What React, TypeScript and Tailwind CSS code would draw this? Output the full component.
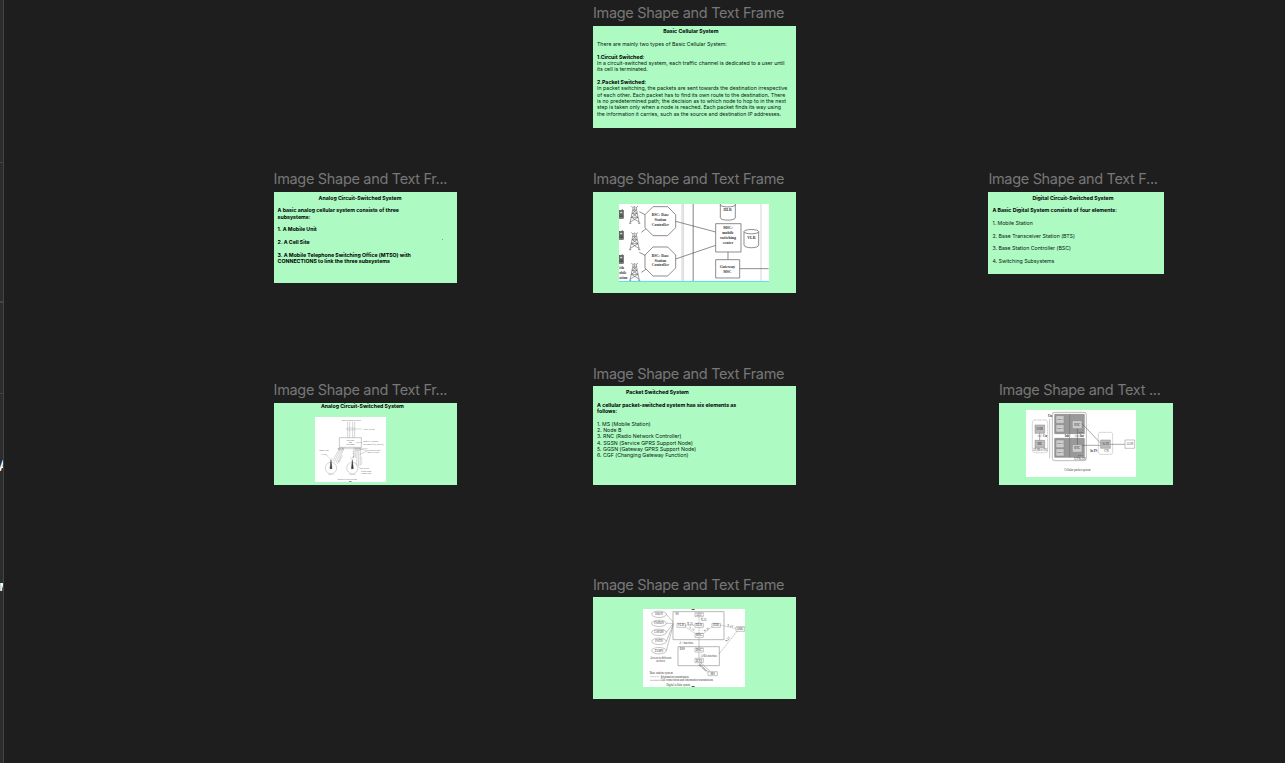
import type { ReactNode } from "react";

type FrameProps = { place: string; size: string; label?: string; gap?: string; children?: ReactNode };

function Frame({ place, size, label = "Image Shape and Text Frame", gap = "mb-[4px]", children }: FrameProps) {
  return (
    <section className={`absolute ${place}`}>
      <h2 className={`h-[18px] whitespace-pre text-[14.5px] leading-[18px] tracking-[-0.32px] text-[#777777] ${gap}`}>{label}</h2>
      <div className={`overflow-hidden bg-[#adfac2] ${size}`}>{children}</div>
    </section>
  );
}

type Line = string | { b: string; pad?: string };

function Copy({ lines, pad = "pt-[2.8px]" }: { lines: Line[]; pad?: string }) {
  return (
    <div className={`pl-[4px] text-[5.23px] leading-[6.33px] text-[#0c1a10] ${pad}`}>
      {lines.map((line, i) =>
        typeof line === "string" ? (
          <p key={i} className="h-[6.33px] whitespace-nowrap">{line}</p>
        ) : (
          <p key={i} className={`h-[6.33px] whitespace-nowrap font-bold text-black ${line.pad ?? ""}`}>{line.b}</p>
        ),
      )}
    </div>
  );
}

type LabelProps = { x: number; y: number; children: string; s?: number; rotate?: number; w?: number; bold?: boolean; start?: boolean };

function T({ x, y, children, s = 9, rotate, w, bold, start }: LabelProps) {
  return (
    <text
      x={x}
      y={y}
      fontSize={s}
      textAnchor={start ? "start" : "middle"}
      fill="currentColor"
      stroke="none"
      fontWeight={bold ? 700 : 400}
      textLength={w}
      lengthAdjust="spacingAndGlyphs"
      transform={rotate ? `rotate(${rotate} ${x} ${y})` : undefined}
    >
      {children}
    </text>
  );
}

function Tower({ x, y }: { x: number; y: number }) {
  return (
    <g transform={`translate(${x} ${y})`} stroke="#444" strokeWidth="1.500" fill="none">
      <path d="M-4 4L-14 54M4 4L14 54M-5 14H5M-7 24H7M-10 36H10M-5 14L7 24L-10 36L13 50M5 14L-7 24L10 36L-13 50M-17 54H-10M10 54H17" />
      <path d="M0 2V14M-10 2L-5 7M10 2L5 7" strokeWidth="1.500" />
    </g>
  );
}

function Phone({ y }: { y: number }) {
  return (
    <g>
      <rect x="104" y={y + 4} width="12" height="24" fill="#777" />
      <rect x="105.500" y={y + 7} width="8" height="7" fill="#ddd" />
      <path d={`M105 ${y + 18}H115M105 ${y + 22}H115`} stroke="#333" strokeWidth="2" />
      <path d={`M113 ${y}V${y + 5}`} stroke="#555" strokeWidth="2" />
    </g>
  );
}

function CircuitDiagram() {
  return (
    <svg viewBox="103 116 449 235" className="h-[78.33px] w-[149.67px] bg-white font-['Liberation_Serif',serif] text-[#333]" fill="none" stroke="#555" strokeWidth="2">
      <path d="M292 116V348M296 116V348M529 116V348" stroke="#c0c0c0" />
      <path d="M325.500 116V348" stroke="#444" />
      <path d="M164 139L181 148M170 201L187 188M164 261L181 270M170 321L187 310M273 168L393 200M273 281L393 240M430 260V283M465 310H552" />
      <path d="M205 124H249L273 148V187L249 211H205L181 187V148ZM205 245H249L273 269V308L249 332H205L181 308V269Z" fill="#fff" />
      <path d="M393 175H469V260H393ZM393 283H465V338H393Z" fill="#fff" />
      <path d="M407 112V157C407 167 452 167 452 157V112" fill="#fff" />
      <path d="M407 118C407 127 452 127 452 118" />
      <path d="M478 199V239C478 250 522 250 522 239V199" fill="#fff" />
      <ellipse cx="500" cy="199" rx="22" ry="6.500" fill="#fff" />
      <Tower x={150} y={120} />
      <Tower x={150} y={199} />
      <Tower x={150} y={291} />
      <Phone y={131} />
      <Phone y={194} />
      <Phone y={266} />
      <T x={227} y={153} s={13} bold w={52}>BSC: Base</T>
      <T x={227} y={168} s={13} bold w={35}>Station</T>
      <T x={227} y={182} s={13} bold w={51}>Controller</T>
      <T x={227} y={274} s={13} bold w={52}>BSC: Base</T>
      <T x={227} y={289} s={13} bold w={35}>Station</T>
      <T x={227} y={303} s={13} bold w={51}>Controller</T>
      <T x={429} y={138} s={12} bold w={25}>HLR</T>
      <T x={430} y={192} s={13} bold w={29}>MSC:</T>
      <T x={430} y={206} s={13} bold w={35}>mobile</T>
      <T x={430} y={220} s={13} bold w={48}>switching</T>
      <T x={430} y={235} s={13} bold w={32}>center</T>
      <T x={500} y={220} s={12} bold w={25}>VLR</T>
      <T x={428} y={308} s={13} bold w={46}>Gateway</T>
      <T x={428} y={322} s={13} bold w={25}>MSC</T>
      <T x={104} y={312} s={12} bold start>ith</T>
      <T x={104} y={327} s={12} bold start w={22}>obile</T>
      <T x={104} y={341} s={12} bold start w={24}>ation</T>
    </svg>
  );
}

function AnalogDiagram() {
  return (
    <svg viewBox="150 116 214 195" className="h-[65px] w-[71.33px] bg-white font-['Liberation_Serif',serif] text-[#555]" fill="none" stroke="#999" strokeWidth="1.200">
      <path d="M248 130V178M254 130V178M263 130V178M269 130V178" />
      <path d="M223 178H289V207H223Z" stroke="#777" />
      <ellipse cx="258" cy="152" rx="14" ry="3" />
      <path d="M273 152H290M272 193H292M218 211H308M218 211L225 215M308 217L283 212M308 218L284 228" />
      <path d="M225 207L204 247M229 207L208 251M234 207L213 253M238 207L217 256M267 207V236M272 207V239M277 207L275 262M282 207L280 265M287 207L285 262" />
      <ellipse cx="228" cy="212" rx="9" ry="3" />
      <ellipse cx="279" cy="213" rx="9" ry="3" />
      <circle cx="198" cy="269" r="17" />
      <circle cx="262" cy="269" r="17" />
      <path d="M198 245L195 271H201ZM262 245L259 271H265Z" fill="#333" stroke="#333" />
      <path d="M192 237L198 245L201 240M256 237L262 245L265 240M181 228L190 235M282 268L292 272" />
      <T x={258} y={127} s={7} w={59}>Land telephone network</T>
      <T x={312} y={154} s={6} w={34}>Voice circuits</T>
      <T x={256} y={187} s={6} w={23}>Processor</T>
      <T x={256} y={194} s={6} w={10}>and</T>
      <T x={256} y={201} s={6} w={25}>switching</T>
      <T x={295} y={192} s={7} start w={45}>Mobile telephone</T>
      <T x={295} y={199} s={7} start w={61}>switching office (MTSO)</T>
      <T x={308} y={217} s={6} start w={41}>Dedicated voice-</T>
      <T x={308} y={225} s={6} start w={34}>grade circuits</T>
      <T x={177} y={219} s={6} w={29}>Mobile unit</T>
      <T x={176} y={230} s={6} w={16}>Tx/Rx</T>
      <T x={228} y={243} s={6} rotate={-62}>Voice line</T>
      <T x={267} y={229} s={6} rotate={-88}>Data link</T>
      <T x={291} y={247} s={6} rotate={-88}>Voice line</T>
      <T x={198} y={291} s={6} w={17}>Cell #1</T>
      <T x={262} y={291} s={6} w={17}>Cell #2</T>
      <T x={288} y={273} s={6} start w={26}>Cell site:</T>
      <T x={288} y={280} s={6} start w={33}>Radio transc.</T>
      <T x={288} y={287} s={6} start w={31}>Control unit</T>
      <T x={245} y={305} s={7} w={60}>Analog cellular system</T>
      <path d="M252 310H260" stroke="#444" strokeWidth="2" />
    </svg>
  );
}

function PacketDiagram() {
  return (
    <svg viewBox="108 97 329 200" className="h-[66.67px] w-[109.67px] bg-white font-['Liberation_Serif',serif] text-[#333]" fill="none" stroke="#777" strokeWidth="1.500">
      <rect x="127" y="127" width="46" height="98" rx="7" stroke="#999" strokeDasharray="4 1" />
      <rect x="187" y="104" width="102" height="145" rx="7" stroke="#777" />
      <rect x="325" y="164" width="43" height="66" rx="6" stroke="#999" strokeDasharray="4 1" />
      <path d="M179 123V242" stroke="#aaa" strokeWidth="2" />
      <path d="M194 110H283V168H194ZM194 182H283V239H194Z" fill="#999" stroke="#777" />
      <path d="M239 110V239" stroke="#666" />
      <g fill="#ccc" stroke="#888">
        <path d="M198 114H222V137H198ZM198 141H222V163H198ZM198 187H222V210H198ZM198 213H222V235H198ZM247 129H276V153H247ZM247 201H276V224H247Z" />
        <path d="M135 142H164V167H135ZM135 188H164V211H135ZM332 187H361V212H332Z" fill="#bbb" />
        <path d="M405 187H434V212H405Z" fill="#fff" />
      </g>
      <path d="M149 167V188M143 175H155M262 153V201M254 175H269M276 138L333 198M276 203H332M361 200H405" stroke="#555" />
      <T x={210} y={128} s={8} w={18}>Node B</T>
      <T x={210} y={155} s={8} w={18}>Node B</T>
      <T x={210} y={200} s={8} w={18}>Node B</T>
      <T x={210} y={227} s={8} w={18}>Node B</T>
      <T x={262} y={144} s={9} w={18}>RNC</T>
      <T x={262} y={215} s={9} w={18}>RNC</T>
      <T x={273} y={165} s={8} w={14}>RNS</T>
      <T x={271} y={236} s={8} w={14}>RNS</T>
      <T x={149} y={158} s={9} w={19}>USIM</T>
      <T x={149} y={202} s={9}>ME</T>
      <T x={165} y={178} s={10} bold w={12}>Cu</T>
      <T x={180} y={118} s={10} bold w={12}>Uu</T>
      <T x={151} y={221} s={11} w={43}>UE (MS or CPE)</T>
      <T x={231} y={178} s={9} bold>Iub</T>
      <T x={276} y={178} s={9} bold>Iur</T>
      <T x={270} y={248} s={10} w={34}>UTRAN</T>
      <T x={311} y={223} s={10} bold w={21}>Iu PS</T>
      <T x={349} y={223} s={10}>CN</T>
      <T x={347} y={203} s={9} w={19}>SGSN</T>
      <T x={420} y={202} s={9} w={19}>GGSN</T>
      <T x={262} y={281} s={10} w={79}>Cellular packet system</T>
    </svg>
  );
}

function DigitalDiagram() {
  return (
    <svg viewBox="175 117 305 235" className="h-[78.33px] w-[101.67px] bg-white font-['Liberation_Serif',serif] text-[#333]" fill="none" stroke="#777" strokeWidth="1.300">
      <path d="M265 125H418V209H265ZM280 230H404V287H280Z" stroke="#888" strokeWidth="1.800" />
      <g stroke="#777">
        <ellipse cx="223" cy="133" rx="22" ry="9.500" />
        <ellipse cx="223" cy="160" rx="22" ry="9.500" />
        <ellipse cx="223" cy="187" rx="22" ry="9.500" />
        <ellipse cx="223" cy="214" rx="22" ry="9.500" />
        <ellipse cx="223" cy="242" rx="22" ry="9.500" />
        <path d="M245 133L266 157M245 160H266M245 187L266 160M245 214L266 162M245 242L266 164" />
        <path d="M331 128H356V140H331ZM277 160H302V172H277ZM331 160H356V172H331ZM382 160H407V172H382ZM331 190H356V202H331ZM331 234H356V246H331ZM331 265H356V278H331ZM454 170H480V184H454ZM370 305H398V317H370Z" />
      </g>
      <path d="M343 202V234M343 246V265M343 278L370 307M346 276L376 304" />
      <path d="M343 140V160M302 166H331M343 172V190M302 171L331 190M356 191L382 170M407 165L454 176M404 251L457 184" strokeDasharray="5 2" />
      <path d="M321 118H330" stroke="#333" strokeWidth="3" />
      <T x={223} y={136} w={22}>ISDN</T>
      <T x={223} y={163} w={28}>PSPDN</T>
      <T x={223} y={190} w={28}>CSPDN</T>
      <T x={223} y={217} w={22}>PSTN</T>
      <T x={223} y={245} w={25}>PLMN</T>
      <T x={277} y={136} s={9}>SS</T>
      <T x={343} y={137} w={19}>AUC</T>
      <T x={289} y={169} w={19}>VLR</T>
      <T x={343} y={169} w={19}>HLR</T>
      <T x={394} y={169} w={17}>EIR</T>
      <T x={343} y={199} w={20}>MSC</T>
      <T x={343} y={243} w={18}>BSC</T>
      <T x={343} y={275} w={18}>BTS</T>
      <T x={467} y={180} w={19}>OMC</T>
      <T x={384} y={314}>MS</T>
      <T x={293} y={241}>BSS</T>
      <T x={357} y={153}>X.25</T>
      <T x={316} y={164}>X.25</T>
      <T x={320} y={179} rotate={28}>X.25</T>
      <T x={367} y={181} rotate={-35}>X.25</T>
      <T x={436} y={170} rotate={12}>X.25</T>
      <T x={431} y={210} rotate={-52}>X.25</T>
      <T x={305} y={222} w={43}>A - interface</T>
      <T x={373} y={261} w={49}>A-Bis interface</T>
      <T x={353} y={296} s={8} rotate={42}>Um interf.</T>
      <T x={228} y={267} w={64}>Access to different</T>
      <T x={228} y={277} w={27}>services</T>
      <T x={195} y={312} start w={69}>Base station system</T>
      <path d="M196 320H225" strokeDasharray="5 2" />
      <path d="M196 331H227" />
      <T x={228} y={323} start w={84}>Information transmission</T>
      <T x={228} y={334} start w={157}>Call connections and information transmission</T>
      <T x={281} y={349} w={71}>Digital cellular system</T>
      <path d="M321 350H330" stroke="#333" strokeWidth="3" />
    </svg>
  );
}

const cellular: Line[] = [
  { b: "Basic Cellular System", pad: "pl-[66.3px]" },
  "",
  "There are mainly two types of Basic Cellular System:",
  "",
  { b: "1.Circuit Switched:" },
  "In a circuit-switched system, each traffic channel is dedicated to a user until",
  "its cell is terminated.",
  "",
  { b: "2.Packet Switched:" },
  "In packet switching, the packets are sent towards the destination irrespective",
  "of each other. Each packet has to find its own route to the destination. There",
  "is no predetermined path; the decision as to which node to hop to in the next",
  "step is taken only when a node is reached. Each packet finds its way using",
  "the information it carries, such as the source and destination IP addresses.",
];

const analog: Line[] = [
  { b: "Analog Circuit-Switched System", pad: "pl-[41px]" },
  "",
  { b: "A basic analog cellular system consists of three" },
  { b: "subsystems:" },
  "",
  { b: "1. A Mobile Unit" },
  "",
  { b: "2. A Cell Site" },
  "",
  { b: "3. A Mobile Telephone Switching Office (MTSO) with" },
  { b: "CONNECTIONS to link the three subsystems" },
];

const digital: Line[] = [
  { b: "Digital Circuit-Switched System", pad: "pl-[40px]" },
  "",
  { b: "A Basic Digital System consists of four elements:" },
  "",
  "1. Mobile Station",
  "",
  "2. Base Transceiver Station (BTS)",
  "",
  "3. Base Station Controller (BSC)",
  "",
  "4. Switching Subsystems",
];

const packet: Line[] = [
  { b: "Packet Switched System", pad: "pl-[29px]" },
  "",
  { b: "A cellular packet-switched system has six elements as" },
  { b: "follows:" },
  "",
  "1. MS (Mobile Station)",
  "2. Node B",
  "3. RNC (Radio Network Controller)",
  "4. SGSN (Service GPRS Support Node)",
  "5. GGSN (Gateway GPRS Support Node)",
  "6. CGF (Changing Gateway Function)",
];

export default function App() {
  return (
    <main className="flex h-[763px] w-[1285px] overflow-hidden bg-[#1e1e1e] font-['Inter',sans-serif]">
      <aside className="flex w-[4px] shrink-0 flex-col overflow-hidden border-r border-[#444444] bg-[#2c2c2c]">
        <div className="h-[163px] shrink-0 border-b border-[#444444]" />
        <div className="h-[140px] shrink-0 border-b-2 border-[#444444]" />
        <div className="h-[91px] shrink-0 border-b border-[#444444]" />
        <div className="-ml-[1.5px] flex h-[144px] shrink-0 items-center text-[15px] font-medium text-white">A</div>
        <div className="-ml-[0.5px] flex h-[98px] shrink-0 items-center text-[11px] font-bold text-white">M</div>
      </aside>
      <div className="relative grow">
        <Frame place="left-[589px] top-[4px]" size="h-[102px] w-[203px]">
          <Copy lines={cellular} pad="pt-[2.3px]" />
        </Frame>
        <Frame place="left-[269.6px] top-[170px]" size="h-[91.4px] w-[183.6px]" label="Image Shape and Text Fr...">
          <div className="flex justify-between">
            <Copy lines={analog} />
            <i className="mr-[14px] mt-[47px] h-px w-px bg-[#6fae82]" />
          </div>
        </Frame>
        <Frame place="left-[589px] top-[170px]" size="h-[101.4px] w-[203px]">
          <div className="flex flex-col pl-[26px] pt-[12px]">
            <CircuitDiagram />
            <div className="-mt-[1.33px] h-px w-[150px] bg-[#55e3ee]" />
          </div>
        </Frame>
        <Frame place="left-[984.4px] top-[170px]" size="h-[82.4px] w-[175.400px]" label="Image Shape and Text F...">
          <Copy lines={digital} />
        </Frame>
        <Frame place="left-[269.6px] top-[381px]" size="h-[82.4px] w-[183.6px]" label="Image Shape and Text Fr...">
          <Copy lines={[{ b: "Analog Circuit-Switched System", pad: "pl-[43.3px]" }]} pad="pt-0" />
          <div className="flex pl-[41px] pt-[7.500px]"><AnalogDiagram /></div>
        </Frame>
        <Frame place="left-[589px] top-[365px]" size="h-[99.4px] w-[203px]" gap="mb-[3px]">
          <Copy lines={packet} pad="pt-[3.2px]" />
        </Frame>
        <Frame place="left-[995px] top-[381px]" size="h-[82.4px] w-[174.4px]" label="Image Shape and Text ...">
          <div className="flex pl-[27px] pt-[7.300px]"><PacketDiagram /></div>
        </Frame>
        <Frame place="left-[589px] top-[576px]" size="h-[102px] w-[203px]" gap="mb-[3px]">
          <div className="flex pl-[50.3px] pt-[12px]"><DigitalDiagram /></div>
        </Frame>
      </div>
    </main>
  );
}
